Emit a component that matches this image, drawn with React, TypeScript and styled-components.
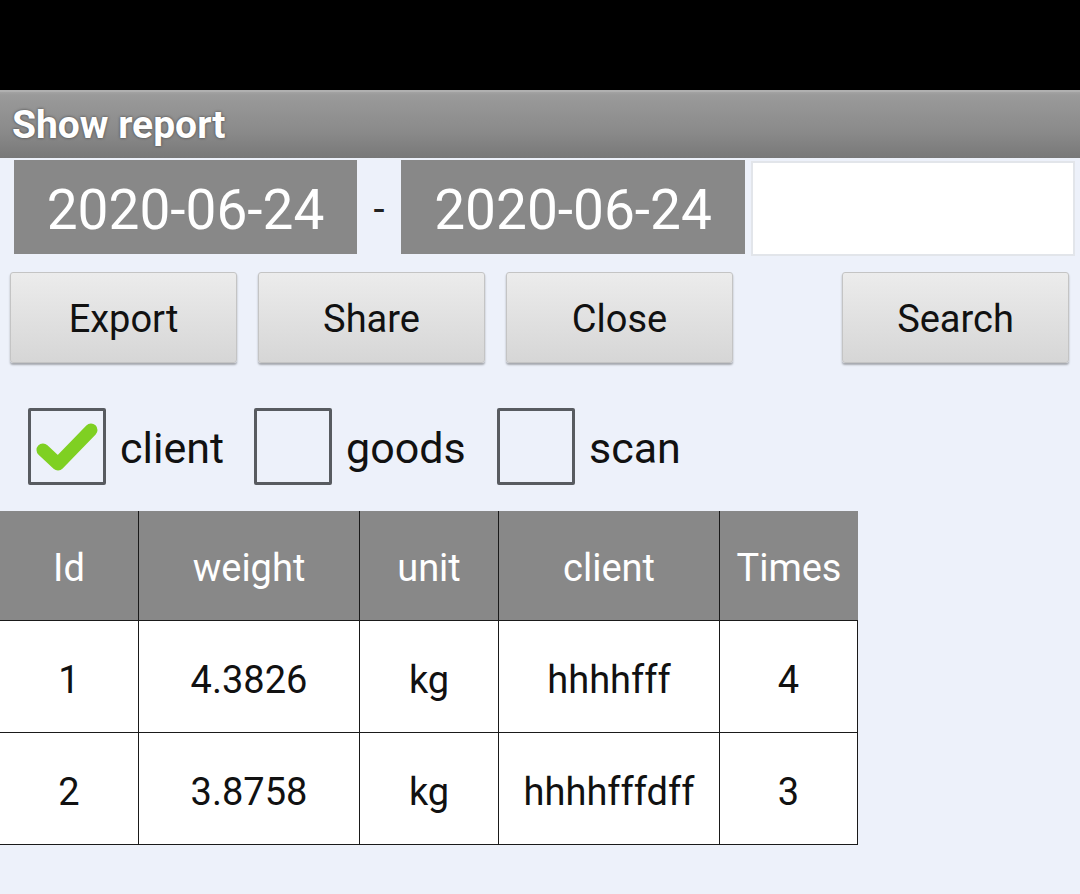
import React from "react";
import styled, { createGlobalStyle } from "styled-components";

const Global = createGlobalStyle`
  html, body { margin: 0; padding: 0; background: #edf1fa; }
  body { font-family: Roboto, "Noto Sans", "Liberation Sans", sans-serif; }
  * { box-sizing: border-box; }
`;

const Screen = styled.div`
  width: 1080px;
  height: 894px;
  background: #edf1fa;
  display: flex;
  flex-direction: column;
  overflow: hidden;
`;

const StatusBar = styled.div`
  height: 90px;
  background: #000;
`;

const TitleBar = styled.div`
  height: 68px;
  background: linear-gradient(#a3a3a3 0px, #9a9a9a 3px, #8a8a8a 40px, #787878 100%);
  border-top: 2px solid #b0b0b0;
  display: flex;
  align-items: center;
  padding-left: 12px;
  padding-bottom: 1px;
`;

const Title = styled.div`
  color: #fff;
  font-weight: 700;
  font-size: 39px;
  text-shadow: 0 0 3px rgba(0, 0, 0, 0.55);
`;

const DateRow = styled.div`
  display: flex;
  align-items: flex-start;
  padding: 2px 5px 0 14px;
  height: 114px;
`;

const DateBox = styled.div<{ $w: number }>`
  width: ${(p) => p.$w}px;
  height: 94px;
  background: #888888;
  color: #fff;
  font-size: 55px;
  display: flex;
  align-items: center;
  justify-content: center;
  padding-top: 5px;
`;

const Dash = styled.div`
  width: 44px;
  height: 94px;
  display: flex;
  align-items: center;
  justify-content: center;
  font-size: 40px;
  color: #222;
  padding-top: 5px;
`;

const SearchInput = styled.div`
  margin-left: 6px;
  margin-top: 1px;
  width: 324px;
  height: 95px;
  background: #fff;
  border: 2px solid #e2e5ea;
`;

const ButtonRow = styled.div`
  display: flex;
  padding-left: 10px;
  gap: 21px;
  height: 136px;
`;

const Btn = styled.div<{ $ml?: number }>`
  width: 227px;
  height: 91px;
  margin-left: ${(p) => p.$ml ?? 0}px;
  background: linear-gradient(#ececec, #d6d6d6);
  border: 1px solid #c4c4c4;
  border-radius: 3px;
  box-shadow: 0 2px 2px rgba(0, 0, 0, 0.3);
  display: flex;
  align-items: center;
  justify-content: center;
  font-size: 38px;
  color: #111;
  padding-top: 2px;
`;

const CheckRow = styled.div`
  display: flex;
  align-items: flex-start;
  padding-left: 28px;
  height: 103px;
`;

const CheckItem = styled.div`
  display: flex;
  align-items: center;
`;

const Box = styled.div`
  width: 78px;
  height: 77px;
  border: 3px solid #585b60;
  border-radius: 2px;
  display: flex;
  align-items: center;
  justify-content: center;
  margin-right: 14px;
`;

const Label = styled.div<{ $w: number }>`
  font-size: 43px;
  color: #111;
  width: ${(p) => p.$w}px;
  padding-top: 2px;
`;

const Table = styled.div`
  display: grid;
  grid-template-columns: 138px 221px 139px 221px 139px;
  width: 858px;
`;

const HeadCell = styled.div<{ $first?: boolean }>`
  height: 110px;
  background: #888888;
  color: #fff;
  font-size: 38px;
  display: flex;
  align-items: center;
  justify-content: center;
  border-left: ${(p) => (p.$first ? "none" : "1px solid #1a1a1a")};
  border-bottom: 1px solid #1a1a1a;
  padding-top: 4px;
`;

const Cell = styled.div<{ $first?: boolean; $last?: boolean }>`
  height: 112px;
  background: #fff;
  color: #111;
  font-size: 38px;
  display: flex;
  align-items: center;
  justify-content: center;
  border-left: ${(p) => (p.$first ? "none" : "1px solid #1a1a1a")};
  border-right: ${(p) => (p.$last ? "1px solid #1a1a1a" : "none")};
  border-bottom: 1px solid #1a1a1a;
  padding-top: 6px;
`;

const Check = () => (
  <svg width="66" height="56" viewBox="0 0 66 56">
    <path
      d="M9 31 L24 45 L57 11"
      fill="none"
      stroke="#7fd022"
      strokeWidth="13"
      strokeLinecap="round"
      strokeLinejoin="round"
    />
  </svg>
);

const headers = ["Id", "weight", "unit", "client", "Times"];
const rows = [
  ["1", "4.3826", "kg", "hhhhfff", "4"],
  ["2", "3.8758", "kg", "hhhhfffdff", "3"],
];

export default function App() {
  return (
    <Screen>
      <Global />
      <StatusBar />
      <TitleBar>
        <Title>Show report</Title>
      </TitleBar>
      <DateRow>
        <DateBox $w={343}>2020-06-24</DateBox>
        <Dash>-</Dash>
        <DateBox $w={344}>2020-06-24</DateBox>
        <SearchInput />
      </DateRow>
      <ButtonRow>
        <Btn>Export</Btn>
        <Btn>Share</Btn>
        <Btn>Close</Btn>
        <Btn $ml={88}>Search</Btn>
      </ButtonRow>
      <CheckRow>
        <CheckItem>
          <Box>
            <Check />
          </Box>
          <Label $w={134}>client</Label>
        </CheckItem>
        <CheckItem>
          <Box />
          <Label $w={151}>goods</Label>
        </CheckItem>
        <CheckItem>
          <Box />
          <Label $w={120}>scan</Label>
        </CheckItem>
      </CheckRow>
      <Table>
        {headers.map((h, i) => (
          <HeadCell key={h} $first={i === 0}>
            {h}
          </HeadCell>
        ))}
        {rows.map((r) =>
          r.map((c, i) => (
            <Cell key={r[0] + i} $first={i === 0} $last={i === r.length - 1}>
              {c}
            </Cell>
          ))
        )}
      </Table>
    </Screen>
  );
}
